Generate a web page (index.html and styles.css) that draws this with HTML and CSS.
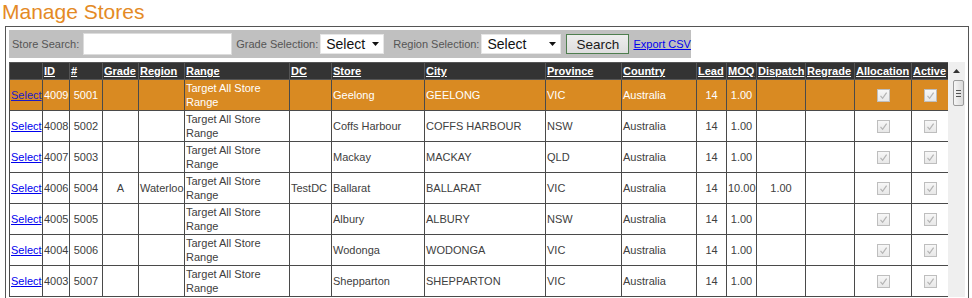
FILE: index.html
```html
<!DOCTYPE html>
<html lang="en">
<head>
  <meta charset="UTF-8">
  <meta name="viewport" content="width=device-width, initial-scale=1.0">
  <title>Manage Stores</title>
  <link rel="stylesheet" href="styles.css">
</head>
<body>
  <h1 class="page-title">Manage Stores</h1>

  <div class="panel">
    <div class="filters">
      <label class="filter-label">Store Search:</label>
      <input type="text" class="search-input">
      <label class="filter-label grade-label">Grade Selection:</label>
      <div class="dropdown grade-select">
        <span>Select</span>
        <svg width="7" height="4" viewBox="0 0 7 4"><path d="M0 0H7L3.5 4Z" fill="#111"/></svg>
      </div>
      <label class="filter-label region-label">Region Selection:</label>
      <div class="dropdown region-select">
        <span>Select</span>
        <svg width="7" height="4" viewBox="0 0 7 4"><path d="M0 0H7L3.5 4Z" fill="#111"/></svg>
      </div>
      <button class="search-btn">Search</button>
      <a href="#" class="export-link">Export CSV</a>
    </div>

    <div class="grid-area">
      <div class="grid-scroll">
        <table class="stores">
          <colgroup>
            <col class="c-sel"><col class="c-id"><col class="c-num"><col class="c-grade"><col class="c-region">
            <col class="c-range"><col class="c-dc"><col class="c-store"><col class="c-city"><col class="c-prov">
            <col class="c-country"><col class="c-lead"><col class="c-moq"><col class="c-disp"><col class="c-regrade">
            <col class="c-alloc"><col class="c-active">
          </colgroup>
          <thead>
            <tr>
              <th></th>
              <th><span>ID</span></th>
              <th><span>#</span></th>
              <th><span>Grade</span></th>
              <th><span>Region</span></th>
              <th><span>Range</span></th>
              <th><span>DC</span></th>
              <th><span>Store</span></th>
              <th><span>City</span></th>
              <th><span>Province</span></th>
              <th><span>Country</span></th>
              <th><span>Lead</span></th>
              <th><span>MOQ</span></th>
              <th><span>Dispatch</span></th>
              <th><span>Regrade</span></th>
              <th><span>Allocation</span></th>
              <th><span>Active</span></th>
            </tr>
          </thead>
          <tbody>
            <tr class="selected">
              <td><a href="#">Select</a></td><td class="mid">4009</td><td class="mid">5001</td><td class="mid"></td><td></td>
              <td>Target All Store Range</td><td></td><td>Geelong</td><td>GEELONG</td><td>VIC</td><td>Australia</td>
              <td class="mid">14</td><td class="mid">1.00</td><td class="mid"></td><td></td>
              <td class="mid"><span class="chk"><svg width="11" height="11" viewBox="0 0 11 11"><path d="M2.5 5.8L4.6 8.3L8.6 2.6" fill="none" stroke="#b4b4b4" stroke-width="1.2"/></svg></span></td>
              <td class="mid"><span class="chk"><svg width="11" height="11" viewBox="0 0 11 11"><path d="M2.5 5.8L4.6 8.3L8.6 2.6" fill="none" stroke="#b4b4b4" stroke-width="1.2"/></svg></span></td>
            </tr>
            <tr>
              <td><a href="#">Select</a></td><td class="mid">4008</td><td class="mid">5002</td><td class="mid"></td><td></td>
              <td>Target All Store Range</td><td></td><td>Coffs Harbour</td><td>COFFS HARBOUR</td><td>NSW</td><td>Australia</td>
              <td class="mid">14</td><td class="mid">1.00</td><td class="mid"></td><td></td>
              <td class="mid"><span class="chk"><svg width="11" height="11" viewBox="0 0 11 11"><path d="M2.5 5.8L4.6 8.3L8.6 2.6" fill="none" stroke="#b4b4b4" stroke-width="1.2"/></svg></span></td>
              <td class="mid"><span class="chk"><svg width="11" height="11" viewBox="0 0 11 11"><path d="M2.5 5.8L4.6 8.3L8.6 2.6" fill="none" stroke="#b4b4b4" stroke-width="1.2"/></svg></span></td>
            </tr>
            <tr>
              <td><a href="#">Select</a></td><td class="mid">4007</td><td class="mid">5003</td><td class="mid"></td><td></td>
              <td>Target All Store Range</td><td></td><td>Mackay</td><td>MACKAY</td><td>QLD</td><td>Australia</td>
              <td class="mid">14</td><td class="mid">1.00</td><td class="mid"></td><td></td>
              <td class="mid"><span class="chk"><svg width="11" height="11" viewBox="0 0 11 11"><path d="M2.5 5.8L4.6 8.3L8.6 2.6" fill="none" stroke="#b4b4b4" stroke-width="1.2"/></svg></span></td>
              <td class="mid"><span class="chk"><svg width="11" height="11" viewBox="0 0 11 11"><path d="M2.5 5.8L4.6 8.3L8.6 2.6" fill="none" stroke="#b4b4b4" stroke-width="1.2"/></svg></span></td>
            </tr>
            <tr>
              <td><a href="#">Select</a></td><td class="mid">4006</td><td class="mid">5004</td><td class="mid">A</td><td>Waterloo</td>
              <td>Target All Store Range</td><td>TestDC</td><td>Ballarat</td><td>BALLARAT</td><td>VIC</td><td>Australia</td>
              <td class="mid">14</td><td class="mid">10.00</td><td class="mid">1.00</td><td></td>
              <td class="mid"><span class="chk"><svg width="11" height="11" viewBox="0 0 11 11"><path d="M2.5 5.8L4.6 8.3L8.6 2.6" fill="none" stroke="#b4b4b4" stroke-width="1.2"/></svg></span></td>
              <td class="mid"><span class="chk"><svg width="11" height="11" viewBox="0 0 11 11"><path d="M2.5 5.8L4.6 8.3L8.6 2.6" fill="none" stroke="#b4b4b4" stroke-width="1.2"/></svg></span></td>
            </tr>
            <tr>
              <td><a href="#">Select</a></td><td class="mid">4005</td><td class="mid">5005</td><td class="mid"></td><td></td>
              <td>Target All Store Range</td><td></td><td>Albury</td><td>ALBURY</td><td>NSW</td><td>Australia</td>
              <td class="mid">14</td><td class="mid">1.00</td><td class="mid"></td><td></td>
              <td class="mid"><span class="chk"><svg width="11" height="11" viewBox="0 0 11 11"><path d="M2.5 5.8L4.6 8.3L8.6 2.6" fill="none" stroke="#b4b4b4" stroke-width="1.2"/></svg></span></td>
              <td class="mid"><span class="chk"><svg width="11" height="11" viewBox="0 0 11 11"><path d="M2.5 5.8L4.6 8.3L8.6 2.6" fill="none" stroke="#b4b4b4" stroke-width="1.2"/></svg></span></td>
            </tr>
            <tr>
              <td><a href="#">Select</a></td><td class="mid">4004</td><td class="mid">5006</td><td class="mid"></td><td></td>
              <td>Target All Store Range</td><td></td><td>Wodonga</td><td>WODONGA</td><td>VIC</td><td>Australia</td>
              <td class="mid">14</td><td class="mid">1.00</td><td class="mid"></td><td></td>
              <td class="mid"><span class="chk"><svg width="11" height="11" viewBox="0 0 11 11"><path d="M2.5 5.8L4.6 8.3L8.6 2.6" fill="none" stroke="#b4b4b4" stroke-width="1.2"/></svg></span></td>
              <td class="mid"><span class="chk"><svg width="11" height="11" viewBox="0 0 11 11"><path d="M2.5 5.8L4.6 8.3L8.6 2.6" fill="none" stroke="#b4b4b4" stroke-width="1.2"/></svg></span></td>
            </tr>
            <tr>
              <td><a href="#">Select</a></td><td class="mid">4003</td><td class="mid">5007</td><td class="mid"></td><td></td>
              <td>Target All Store Range</td><td></td><td>Shepparton</td><td>SHEPPARTON</td><td>VIC</td><td>Australia</td>
              <td class="mid">14</td><td class="mid">1.00</td><td class="mid"></td><td></td>
              <td class="mid"><span class="chk"><svg width="11" height="11" viewBox="0 0 11 11"><path d="M2.5 5.8L4.6 8.3L8.6 2.6" fill="none" stroke="#b4b4b4" stroke-width="1.2"/></svg></span></td>
              <td class="mid"><span class="chk"><svg width="11" height="11" viewBox="0 0 11 11"><path d="M2.5 5.8L4.6 8.3L8.6 2.6" fill="none" stroke="#b4b4b4" stroke-width="1.2"/></svg></span></td>
            </tr>
          </tbody>
        </table>
      </div>

      <div class="scrollbar">
        <div class="sb-up">
          <svg width="7" height="4" viewBox="0 0 7 4"><path d="M0 4H7L3.5 0Z" fill="#333"/></svg>
        </div>
        <div class="sb-thumb">
          <span class="grip"></span><span class="grip"></span><span class="grip"></span>
        </div>
      </div>
    </div>
  </div>
</body>
</html>
```

FILE: styles.css
```css
html, body {
  height: 100%;
  overflow: hidden;
}
body {
  margin: 0;
  background: #fff;
  font-family: "Liberation Sans", Arial, sans-serif;
}
.page-title {
  margin: 0 0 2px 2px;
  font-size: 21px;
  line-height: 24px;
  font-weight: normal;
  color: #e48a25;
}
.panel {
  margin-left: 5px;
  width: 956px;
  padding: 3px;
  border: 1px solid #555;
}

/* filter bar */
.filters {
  display: flex;
  align-items: center;
  width: fit-content;
  height: 28px;
  padding-left: 3px;
  background-color: #c0c0c0;
  font-size: 11px;
  color: #555;
}
.search-input {
  box-sizing: border-box;
  width: 149px;
  height: 22px;
  margin: 0 0 0 4px;
  padding: 0 3px;
  border: 1px solid #dcdcdc;
  background: #fff;
}
.grade-label {
  margin-left: 4px;
}
.region-label {
  margin-left: 9px;
}
.dropdown {
  box-sizing: border-box;
  display: flex;
  align-items: center;
  justify-content: space-between;
  height: 20px;
  margin-left: 2px;
  padding: 0 4px 0 5px;
  background: #fff;
  border: 1px solid #e6e6e6;
  font-size: 14px;
  color: #111;
}
.grade-select {
  width: 64px;
}
.region-select {
  width: 80px;
}
.search-btn {
  box-sizing: border-box;
  width: 63px;
  height: 20px;
  margin-left: 5px;
  padding: 0;
  border: 1px solid #4e7e4e;
  background: linear-gradient(#ededed, #dedede);
  font-family: "Liberation Sans", Arial, sans-serif;
  font-size: 13.5px;
  color: #1a1a1a;
}
.export-link {
  margin-left: 4px;
  color: #0000ee;
  font-size: 11px;
}

/* grid */
.grid-area {
  display: flex;
  margin-top: 4px;
}
.grid-scroll {
  width: 939px;
}
.stores {
  width: 939px;
  table-layout: fixed;
  border-collapse: collapse;
  font-size: 11px;
  line-height: 14px;
  color: #404040;
}
.stores th,
.stores td {
  padding: 1px;
  border: 1px solid #4a4a4a;
  text-align: left;
  vertical-align: middle;
  overflow: hidden;
}
.stores th {
  background-color: #333;
  border-color: #555;
  color: #fff;
  font-weight: bold;
  white-space: nowrap;
}
.stores th span {
  text-decoration: underline;
}
.stores td.mid {
  text-align: center;
}
.stores td a {
  color: #0000ee;
}
.stores tr.selected td {
  background-color: #d98a22;
  color: #fff;
}
.stores tr.selected td a {
  color: #1a1ac8;
}
.c-sel { width: 33px; }
.c-id { width: 27px; }
.c-num { width: 33px; }
.c-grade { width: 36px; }
.c-region { width: 46px; }
.c-range { width: 105px; }
.c-dc { width: 42px; }
.c-store { width: 93px; }
.c-city { width: 121px; }
.c-prov { width: 76px; }
.c-country { width: 75px; }
.c-lead { width: 30px; }
.c-moq { width: 30px; }
.c-disp { width: 49px; }
.c-regrade { width: 49px; }
.c-alloc { width: 57px; }
.c-active { width: 37px; }

.chk {
  display: inline-block;
  width: 11px;
  height: 11px;
  border: 1px solid #bebebe;
  background: linear-gradient(#f7f7f7, #e8e8e8);
  vertical-align: middle;
}
.chk svg {
  display: block;
}

/* fake scrollbar */
.scrollbar {
  width: 17px;
  background-color: #efefef;
}
.sb-up {
  display: flex;
  align-items: center;
  justify-content: center;
  height: 17px;
}
.sb-thumb {
  display: flex;
  flex-direction: column;
  align-items: center;
  justify-content: center;
  gap: 2px;
  width: 9px;
  height: 24px;
  margin: 1px 0 0 5px;
  border: 1px solid #9a9a9a;
  border-radius: 2px;
  background: linear-gradient(to right, #f6f6f6, #dadada);
}
.grip {
  width: 5px;
  height: 1px;
  background-color: #555;
}
```
